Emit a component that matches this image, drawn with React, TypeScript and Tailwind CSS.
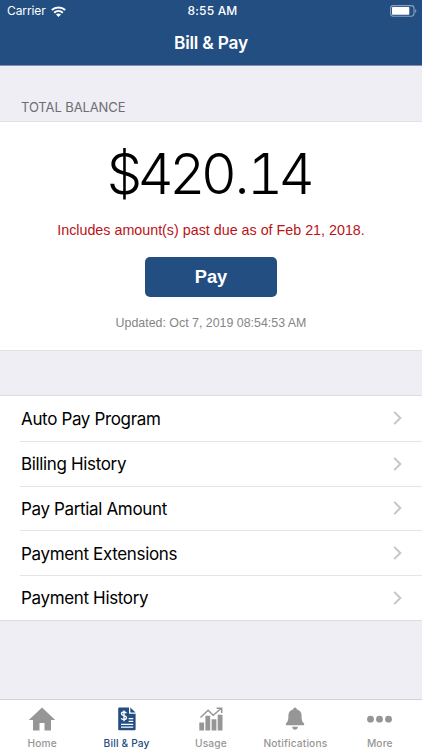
import type { ReactNode } from 'react';
import { clsx } from 'clsx';

const menuItems = [
  'Auto Pay Program',
  'Billing History',
  'Pay Partial Amount',
  'Payment Extensions',
  'Payment History'
];

function WifiIcon() {
  return (
    <svg width="15" height="11" viewBox="0 0 15 11" fill="none" stroke="currentColor" strokeWidth="2">
      <path d="M.8 4.1C4.6 .5 10.4 .5 14.2 4.1" />
      <path d="M3.2 6.7C5.7 4.4 9.3 4.4 11.8 6.7" />
      <path d="M5 8.4C6.4 7.1 8.6 7.1 10 8.4L7.5 10.9Z" fill="currentColor" stroke="none" />
    </svg>
  );
}

function BatteryIcon() {
  return (
    <svg width="27" height="12" viewBox="0 0 27 12" fill="none">
      <rect x="0.6" y="0.6" width="23.4" height="10.6" rx="2.6" stroke="#8ba0c0" strokeWidth="1.1" />
      <rect x="2" y="2" width="17.3" height="7.8" rx="0.8" fill="#fff" />
      <path d="M25.2 4C26.7 4.5 26.7 7.4 25.2 7.9Z" fill="#8ba0c0" />
    </svg>
  );
}

function HomeIcon() {
  return (
    <svg width="28" height="24" viewBox="0 0 28 24" fill="currentColor">
      <path d="M14 .5L27.2 13H23V23.5H16.5V16H11.5V23.5H5V13H.8Z" />
    </svg>
  );
}

function BillIcon() {
  return (
    <svg width="18" height="24" viewBox="0 0 18 24" fill="none">
      <path d="M1.2 .5H11V6.7H17.6V22.2Q17.6 23.2 16.6 23.2H1.2Q.2 23.2 .2 22.2V1.5Q.2 .5 1.2 .5Z" fill="currentColor" />
      <path d="M12.3 .5L17.6 5.6H12.3Z" fill="currentColor" />
      <path d="M8.4 6.2C7.7 4.6 3.5 4.5 3.5 6.8C3.5 9.4 8.5 8 8.5 10.8C8.5 13.2 4 13 3.2 11.2M6 3.4V14.3" stroke="#fff" strokeWidth="1.4" />
      <path d="M10.6 11.6H15.2M10.6 14.4H15.2M3 17.3H15.2M3 20.2H15.2" stroke="#fff" strokeWidth="1.2" />
    </svg>
  );
}

function UsageIcon() {
  return (
    <svg width="24" height="24" viewBox="0 0 24 24" fill="currentColor">
      <path d="M.3 15.5H5.1V23.5H.3ZM6.4 8.8H11.2V23.5H6.4ZM12.6 12.3H17.4V23.5H12.6ZM18.7 7.8H23.5V23.5H18.7Z" />
      <path d="M1.5 10.5L9.1 3.3L14.2 8.2L22.4 1.3M17.6 1.2H22.7V6" fill="none" stroke="currentColor" strokeWidth="1.5" />
    </svg>
  );
}

function BellIcon() {
  return (
    <svg width="20" height="24" viewBox="0 0 20 24" fill="currentColor">
      <path d="M10 .5C11.1 .5 11.7 1.2 11.7 2.3C14.9 3.1 16.6 5.5 16.6 8.6C16.6 13.2 17.2 15 18.9 16.3C19.5 16.9 19.3 18.2 18.3 18.2H1.7C.7 18.2 .5 16.9 1.1 16.3C2.8 15 3.4 13.2 3.4 8.6C3.4 5.5 5.1 3.1 8.3 2.3C8.3 1.2 8.9 .5 10 .5Z" />
      <path d="M7.1 19.7H12.9C12.6 23.7 7.4 23.7 7.1 19.7Z" />
    </svg>
  );
}

function MoreIcon() {
  return (
    <svg width="26" height="24" viewBox="0 0 26 24" fill="currentColor">
      <circle cx="3.5" cy="12.2" r="3.4" />
      <circle cx="12.5" cy="12.2" r="3.4" />
      <circle cx="21.5" cy="12.2" r="3.4" />
    </svg>
  );
}

function Chevron() {
  return (
    <svg width="10" height="14" viewBox="0 0 10 14" fill="none" stroke="#c5c5ca" strokeWidth="2">
      <path d="M1.2 .9L7.3 7L1.2 13.1" />
    </svg>
  );
}

interface TabProps {
  label: string;
  icon: ReactNode;
  active?: boolean;
}

function Tab({ label, icon, active }: TabProps) {
  return (
    <button
      className={clsx(
        'flex flex-col items-center pt-[7px] text-[10.2px] leading-3 font-medium tracking-[0.15px]',
        active ? 'text-[#234e82]' : 'text-[#969696]'
      )}
    >
      {icon}
      <span className="mt-[6px]">{label}</span>
    </button>
  );
}

export default function App() {
  return (
    <div className="flex h-[750px] w-[422px] flex-col overflow-hidden bg-[#efeef4] font-['Inter',sans-serif]">
      <header className="h-[66px] shrink-0 border-b border-[#7b92b3] bg-[#234e82] text-white">
        <div className="grid h-[22px] grid-cols-3 items-center pr-[5px] pl-[7px] text-[12px]">
          <div className="flex items-center gap-[5px]">
            <span className="tracking-[-0.1px]">Carrier</span>
            <WifiIcon />
          </div>
          <span className="pl-px text-center font-medium tracking-[0.2px]">8:55 AM</span>
          <div className="flex justify-end">
            <BatteryIcon />
          </div>
        </div>
        <h1 className="text-center text-[17.3px] leading-[42px] font-semibold tracking-[-0.2px]">Bill &amp; Pay</h1>
      </header>

      <h2 className="flex h-14 shrink-0 items-end border-b border-[#e2e1e6] pb-[6px] pl-[21px] text-[13px] leading-4 tracking-[-0.1px] text-[#6d6d72]">
        TOTAL BALANCE
      </h2>

      {/* Balance */}
      <section className="flex h-[229px] shrink-0 flex-col items-center border-b border-[#e2e1e6] bg-white font-['Liberation_Sans',sans-serif]">
        <p className="mt-[22px] mr-[5px] font-['Inter',sans-serif] text-[56px] leading-[60px] font-light tracking-[-4.6px] text-black tabular-nums">
          $420<span className="px-[2px]">.</span>14
        </p>
        <p className="mt-[16px] text-[14.3px] leading-5 text-[#bb1217]">
          Includes amount(s) past due as of Feb 21, 2018.
        </p>
        <button className="mt-[17px] h-10 w-[132px] rounded-[5px] bg-[#234e82] text-[18.3px] font-bold text-white">Pay</button>
        <p className="mt-[18px] text-[12.4px] leading-4 text-[#858585]">Updated: Oct 7, 2019 08:54:53 AM</p>
      </section>

      {/* Billing options */}
      <ul className="mt-[44px] shrink-0 border-y border-[#dddce1] bg-white">
        {menuItems.map((item, i) => (
          <li key={item} className="pl-[21px]">
            <div
              className={clsx(
                '-ml-px flex h-[44.8px] items-center justify-between pr-[19px] pl-px text-[17px] tracking-[-0.35px] text-black',
                i > 0 && 'border-t border-[#e5e5e7]'
              )}
            >
              <span className="pt-[2px]">{item}</span>
              <Chevron />
            </div>
          </li>
        ))}
      </ul>

      <nav className="mt-auto grid h-[51px] shrink-0 grid-cols-5 border-t border-[#d2d1d6] bg-white">
        <Tab label="Home" icon={<HomeIcon />} />
        <Tab label="Bill & Pay" icon={<BillIcon />} active />
        <Tab label="Usage" icon={<UsageIcon />} />
        <Tab label="Notifications" icon={<BellIcon />} />
        <Tab label="More" icon={<MoreIcon />} />
      </nav>
    </div>
  );
}
